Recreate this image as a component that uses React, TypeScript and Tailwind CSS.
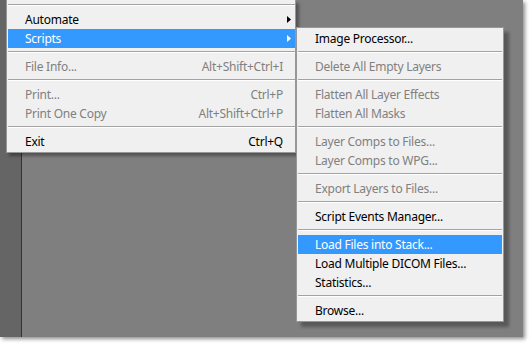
import React from 'react';

type Item = { label: string; shortcut?: string; disabled?: boolean; active?: boolean; submenu?: boolean } | 'sep';

const fileMenu: Item[] = [
  'sep',
  { label: 'Automate', submenu: true },
  { label: 'Scripts', submenu: true, active: true },
  'sep',
  { label: 'File Info...', shortcut: 'Alt+Shift+Ctrl+I', disabled: true },
  'sep',
  { label: 'Print...', shortcut: 'Ctrl+P', disabled: true },
  { label: 'Print One Copy', shortcut: 'Alt+Shift+Ctrl+P', disabled: true },
  'sep',
  { label: 'Exit', shortcut: 'Ctrl+Q' },
];

const scriptsMenu: Item[] = [
  { label: 'Image Processor...' },
  'sep',
  { label: 'Delete All Empty Layers', disabled: true },
  'sep',
  { label: 'Flatten All Layer Effects', disabled: true },
  { label: 'Flatten All Masks', disabled: true },
  'sep',
  { label: 'Layer Comps to Files...', disabled: true },
  { label: 'Layer Comps to WPG...', disabled: true },
  'sep',
  { label: 'Export Layers to Files...', disabled: true },
  'sep',
  { label: 'Script Events Manager...' },
  'sep',
  { label: 'Load Files into Stack...', active: true },
  { label: 'Load Multiple DICOM Files...' },
  { label: 'Statistics...' },
  'sep',
  { label: 'Browse...' },
];

function Arrow({ white }: { white?: boolean }) {
  return (
    <svg width="4" height="7" viewBox="0 0 4 7" className="absolute right-[4px] top-[6px]">
      <path d="M0 0 L4 3.5 L0 7 Z" fill={white ? '#ffffff' : '#000000'} />
    </svg>
  );
}

function MenuRows({ items }: { items: Item[] }) {
  return (
    <>
      {items.map((item, i) =>
        item === 'sep' ? (
          <div key={i} className="h-[9px] pt-[3px]">
            <div className="h-px bg-[#a3a3a3]" />
            <div className="h-px bg-white" />
          </div>
        ) : (
          <div
            key={i}
            className={`relative flex h-[19px] items-center pl-[17px] pr-[12px] ${
              item.active ? 'bg-[#3399ff] text-white' : item.disabled ? 'text-[#808080]' : 'text-black'
            }`}
          >
            <span className="flex-1 whitespace-nowrap">{item.label}</span>
            {item.shortcut && <span className="whitespace-nowrap">{item.shortcut}</span>}
            {item.submenu && <Arrow white={item.active} />}
          </div>
        )
      )}
    </>
  );
}

export default function App() {
  return (
    <div
      className="h-[345px] w-[531px] overflow-hidden bg-white text-[12px] leading-none tracking-[-0.25px]"
      style={{ fontFamily: '"Noto Sans", "Open Sans", sans-serif' }}
    >
      <div className="relative flex h-[337px] w-[523px] shadow-[2px_2px_4px_rgba(0,0,0,0.45)]">
        <div className="h-full w-[22px] border-r border-[#333333] bg-[#656565]" />
        <div className="h-full flex-1 bg-[#7f7f7f]" />

        {/* File menu */}
        <div className="absolute left-[6px] top-0 w-[290px] border border-t-0 border-[#979797] bg-[#f0f0f0] pb-[1px] pt-[1px] shadow-[3px_3px_3px_rgba(0,0,0,0.35)]">
          <div className="pl-[1px]">
            <MenuRows items={fileMenu} />
          </div>
        </div>

        {/* Scripts submenu */}
        <div className="absolute left-[296px] top-[27px] w-[208px] border border-[#979797] bg-[#f0f0f0] p-[1px] shadow-[5px_5px_3px_rgba(0,0,0,0.3)]">
          <MenuRows items={scriptsMenu} />
        </div>
      </div>
    </div>
  );
}
